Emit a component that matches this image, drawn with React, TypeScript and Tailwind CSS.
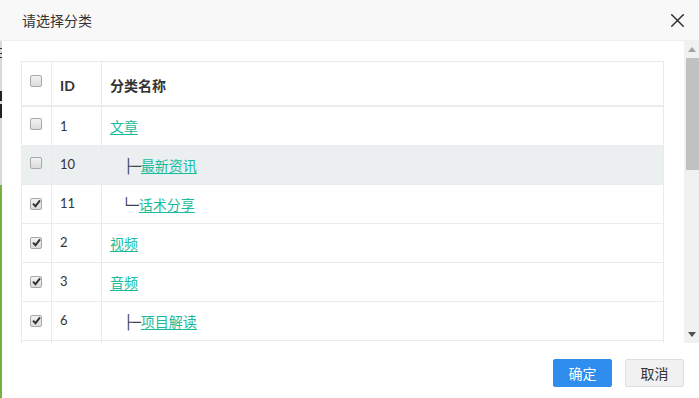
import { X } from 'lucide-react';

type Row = {
  id: number;
  name: string;
  prefix?: string;
  indent?: string;
  checked: boolean;
  active?: boolean;
};

const ROWS: Row[] = [
  { id: 1, name: '文章', checked: false },
  { id: 10, name: '最新资讯', prefix: '├─', indent: 'pl-[14px]', checked: false, active: true },
  { id: 11, name: '话术分享', prefix: '└─', indent: 'pl-[12px]', checked: true },
  { id: 2, name: '视频', checked: true },
  { id: 3, name: '音频', checked: true },
  { id: 6, name: '项目解读', prefix: '├─', indent: 'pl-[14px]', checked: true },
];

const FONT = "font-['Lato','Noto_Sans_CJK_SC',sans-serif]";

function Box({ checked }: { checked: boolean }) {
  return (
    <span className="inline-flex h-[12px] w-[12px] items-center justify-center rounded-[2px] border border-[#a9a9a9] bg-gradient-to-b from-[#f2f2f2] to-[#dcdcdc]">
      {checked && (
        <svg width="9" height="9" viewBox="0 0 9 9">
          <path d="M1 4.6 L3.5 7.2 L8 1.4" fill="none" stroke="#333" strokeWidth="2" />
        </svg>
      )}
    </span>
  );
}

export default function App() {
  return (
    <div className={`flex h-[398px] w-[699px] flex-col overflow-hidden bg-white ${FONT} text-[#333]`}>
      {/* header */}
      <div className="flex h-[41px] shrink-0 items-center justify-between border-b border-[#eee] bg-[#f8f8f8] pl-[22px] pr-[10px]">
        <span className="text-[14px]">请选择分类</span>
        <X size={23} strokeWidth={1.5} className="text-[#2b2b2b]" />
      </div>

      <div className="flex min-h-0 flex-1">
        {/* page behind the modal */}
        <div className="flex w-[2px] shrink-0 flex-col">
          <div className="h-[6px] bg-[#d9d9d9]" />
          <div className="flex h-[12px] flex-col justify-between bg-[#d9d9d9] py-[1px]">
            <div className="h-[1px] bg-[#333]" />
            <div className="h-[1px] bg-[#333]" />
            <div className="h-[1px] bg-[#333]" />
          </div>
          <div className="h-[32px] bg-[#d9d9d9]" />
          <div className="h-[10px] bg-[#222]" />
          <div className="h-[3px] bg-[#d9d9d9]" />
          <div className="h-[14px] bg-[#222]" />
          <div className="h-[67px] bg-[#d9d9d9]" />
          <div className="flex-1 bg-[#76b043]" />
        </div>

        <div className="flex min-w-0 flex-1 flex-col">
          {/* body */}
          <div className="flex h-[302px] shrink-0">
            <div className="min-w-0 flex-1 overflow-hidden pl-[19px] pr-[20px] pt-[20px]">
              <table className="w-full border-collapse border border-[#ebebeb] text-left">
                <thead>
                  <tr className="border-b-2 border-[#ebebeb]">
                    <th className="w-[30px] border-r border-[#ebebeb] p-0">
                      <div className="h-[43px] pl-[8px] pt-[11px] leading-none">
                        <Box checked={false} />
                      </div>
                    </th>
                    <th className="w-[50px] border-r border-[#ebebeb] p-0">
                      <div className="flex h-[43px] items-end pb-[9px] pl-[8px] text-[14px] font-bold">ID</div>
                    </th>
                    <th className="p-0">
                      <div className="flex h-[43px] items-end pb-[9px] pl-[8px] text-[14px] font-bold">分类名称</div>
                    </th>
                  </tr>
                </thead>
                <tbody>
                  {ROWS.map((r) => (
                    <tr
                      key={r.id}
                      className={`h-[39px] border-b border-[#ebebeb] ${r.active ? 'bg-[#ebeff0]' : ''}`}
                    >
                      <td className="border-r border-[#ebebeb] pb-[3px] pl-[8px] align-middle leading-none">
                        <Box checked={r.checked} />
                      </td>
                      <td className="border-r border-[#ebebeb] pl-[8px] pt-[1px] align-middle text-[13px]">
                        {r.id}
                      </td>
                      <td className="pl-[8px] pt-[2px] align-middle text-[14px]">
                        <span className={r.indent}>
                          {r.prefix && (
                            <span className="font-['DejaVu_Sans',sans-serif] text-[#3b4350]">{r.prefix}</span>
                          )}
                          <a className="text-[#18bc9c] underline underline-offset-2">{r.name}</a>
                        </span>
                      </td>
                    </tr>
                  ))}
                  {/* next row, cut off by the scroll area */}
                  <tr className="h-[39px]">
                    <td className="border-r border-[#ebebeb]" />
                    <td className="border-r border-[#ebebeb]" />
                    <td />
                  </tr>
                </tbody>
              </table>
            </div>

            {/* scrollbar */}
            <div className="flex w-[15px] shrink-0 flex-col items-end bg-[#f1f1f1]">
              <div className="flex h-[17px] w-full items-center justify-center">
                <svg width="8" height="5" viewBox="0 0 8 5">
                  <path d="M0 5 L4 0 L8 5 Z" fill="#a3a3a3" />
                </svg>
              </div>
              <div className="h-[112px] w-[13px] bg-[#c1c1c1]" />
              <div className="flex-1" />
              <div className="flex h-[17px] w-full items-center justify-center">
                <svg width="8" height="5" viewBox="0 0 8 5">
                  <path d="M0 0 L8 0 L4 5 Z" fill="#505050" />
                </svg>
              </div>
            </div>
          </div>

          {/* footer */}
          <div className="flex flex-1 items-start justify-end gap-[13px] pr-[15px] pt-[16px]">
            <button className="h-[28px] w-[59px] rounded-[2px] border border-[#2e8ded] bg-[#2e8ded] text-[14px] text-white">
              确定
            </button>
            <button className="h-[28px] w-[59px] rounded-[2px] border border-[#dedede] bg-[#f1f1f1] text-[14px] text-[#333]">
              取消
            </button>
          </div>
        </div>
      </div>
    </div>
  );
}
